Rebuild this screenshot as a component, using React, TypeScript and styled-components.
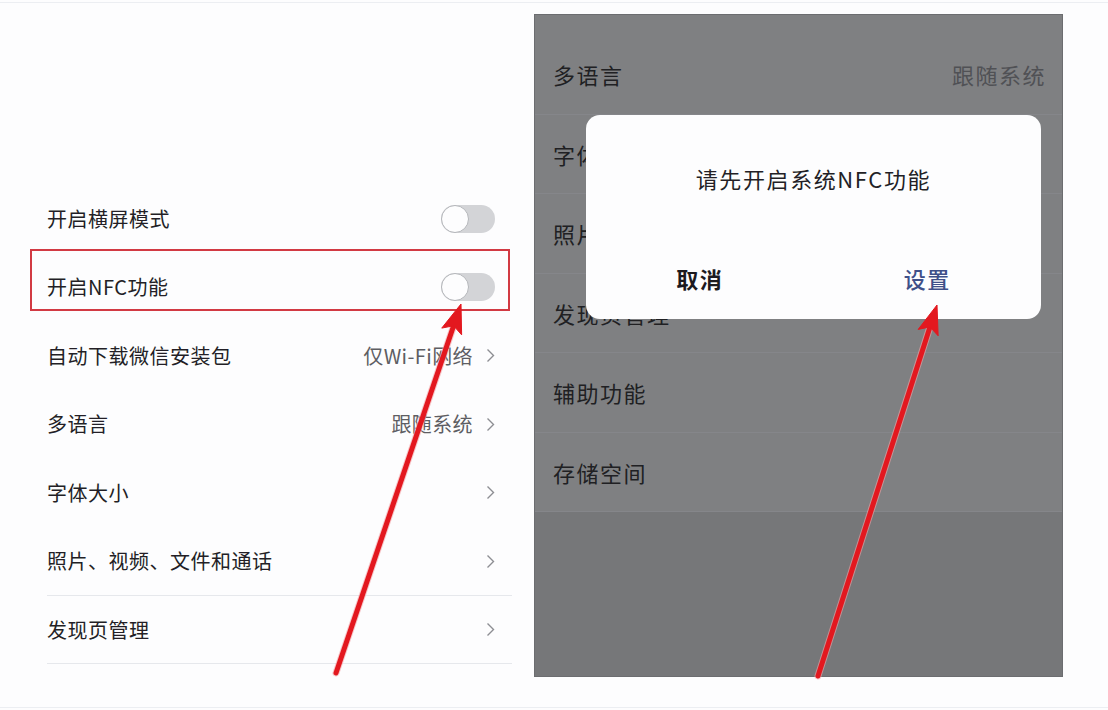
import React from "react";
import styled, { createGlobalStyle } from "styled-components";

const GlobalStyle = createGlobalStyle`
  html, body { margin: 0; padding: 0; background: #fdfdfe; }
  body { font-family: "Noto Sans CJK SC", "Noto Sans", sans-serif; }
  * { box-sizing: border-box; }
`;

const Root = styled.div`
  position: relative;
  width: 1108px;
  height: 710px;
  overflow: hidden;
  background: #fdfdfe;
  padding-top: 2px;
`;

const Frame = styled.div`
  height: 706px;
  border-top: 1px solid #eceef2;
  border-bottom: 1px solid #eceef2;
  display: flex;
  align-items: flex-start;
`;

const LeftPane = styled.div`
  width: 534px;
  flex: none;
  padding: 181.75px 22px 0 47px;
`;

const List = styled.div`
  position: relative;
  display: flex;
  flex-direction: column;
`;

const Row = styled.div<{ $line?: boolean }>`
  height: 68.5px;
  display: flex;
  align-items: center;
  justify-content: space-between;
  padding-right: 17px;
  border-bottom: 1px solid ${(p) => (p.$line ? "#e6e8ec" : "transparent")};
`;

const Label = styled.span`
  font-family: "Noto Sans CJK SC", sans-serif;
  font-size: 20px;
  letter-spacing: 0.5px;
  color: #231f26;
  line-height: 1;
`;

const Trail = styled.div`
  display: flex;
  align-items: center;
  gap: 13px;
`;

const Value = styled.span`
  font-family: "Noto Sans CJK SC", sans-serif;
  font-size: 20px;
  letter-spacing: 0.4px;
  color: #5e5e63;
  line-height: 1;
`;

const Track = styled.div`
  width: 54px;
  height: 28px;
  border-radius: 14px;
  background: #d3d4d7;
  display: flex;
  align-items: center;
`;

const Knob = styled.div`
  width: 28px;
  height: 28px;
  border-radius: 50%;
  background: #fdfdfe;
  border: 1.5px solid #b4b6ba;
`;

const Highlight = styled.div`
  position: absolute;
  left: -17px;
  top: 64.5px;
  width: 480px;
  height: 62px;
  border: 2px solid #d23a43;
  pointer-events: none;
`;

const RightPane = styled.div`
  position: relative;
  margin-top: 11px;
  width: 529px;
  height: 663px;
  flex: none;
  background: #7f8082;
  border: 1px solid #6c6d70;
  display: flex;
  flex-direction: column;
  padding-top: 20px;
`;

const DimRow = styled.div`
  height: 79.5px;
  display: flex;
  align-items: center;
  justify-content: space-between;
  padding: 0 16px 0 18px;
  border-bottom: 1px solid #85868a;
  flex: none;
`;

const DimLabel = styled.span`
  font-family: "Noto Sans CJK SC", sans-serif;
  font-size: 22px;
  letter-spacing: 1.5px;
  color: #202023;
  line-height: 1;
`;

const DimValue = styled.span`
  font-family: "Noto Sans CJK SC", sans-serif;
  font-size: 22px;
  letter-spacing: 1.5px;
  color: #505155;
  line-height: 1;
`;

const DimFill = styled.div`
  flex: 1;
  background: #767779;
`;

const Dialog = styled.div`
  position: absolute;
  left: 51px;
  top: 100px;
  width: 455px;
  height: 204px;
  border-radius: 14px;
  background: #fdfdfe;
  display: flex;
  flex-direction: column;
`;

const DialogTitle = styled.div`
  height: 126px;
  display: flex;
  align-items: center;
  justify-content: center;
  font-family: "Noto Sans CJK SC", sans-serif;
  font-size: 22px;
  letter-spacing: 1.6px;
  color: #231f26;
  line-height: 1;
`;

const DialogActions = styled.div`
  height: 78px;
  display: grid;
  grid-template-columns: 1fr 1fr;
  align-items: center;
`;

const ActionButton = styled.button<{ $primary?: boolean }>`
  border: 0;
  background: transparent;
  padding: 0 0 4px;
  text-align: center;
  font-family: "Noto Sans CJK SC", sans-serif;
  font-size: 22px;
  letter-spacing: 1.5px;
  font-weight: ${(p) => (p.$primary ? 500 : 700)};
  color: ${(p) => (p.$primary ? "#3f5089" : "#1c1a1f")};
  line-height: 1;
`;

const Overlay = styled.svg`
  position: absolute;
  left: 0;
  top: 0;
  pointer-events: none;
`;

const Chevron = () => (
  <svg width="9" height="15" viewBox="0 0 9 15">
    <polyline points="1.5,1.5 7.5,7.5 1.5,13.5" fill="none" stroke="#8d8e93" strokeWidth="1.4" />
  </svg>
);

const Toggle = () => (
  <Track>
    <Knob />
  </Track>
);

type Item = { label: string; value?: string; toggle?: boolean; line?: boolean };

const items: Item[] = [
  { label: "开启横屏模式", toggle: true },
  { label: "开启NFC功能", toggle: true },
  { label: "自动下载微信安装包", value: "仅Wi-Fi网络" },
  { label: "多语言", value: "跟随系统" },
  { label: "字体大小", value: "" },
  { label: "照片、视频、文件和通话", value: "", line: true },
  { label: "发现页管理", value: "", line: true },
];

const dimItems = [
  { label: "多语言", value: "跟随系统" },
  { label: "字体大小" },
  { label: "照片、视频、文件和通话" },
  { label: "发现页管理" },
  { label: "辅助功能" },
  { label: "存储空间" },
];

type Arrow = { x1: number; y1: number; x2: number; y2: number };

const arrows: Arrow[] = [
  { x1: 336, y1: 673, x2: 461, y2: 304 },
  { x1: 818, y1: 676, x2: 937, y2: 305 },
];

const ArrowShape = ({ a }: { a: Arrow }) => {
  const dx = a.x2 - a.x1;
  const dy = a.y2 - a.y1;
  const len = Math.hypot(dx, dy);
  const ux = dx / len;
  const uy = dy / len;
  const px = -uy;
  const py = ux;
  const head = 29;
  const half = 10.5;
  const bx = a.x2 - ux * head;
  const by = a.y2 - uy * head;
  const nx = a.x2 - ux * (head - 6);
  const ny = a.y2 - uy * (head - 6);
  const pts = [
    `${a.x2},${a.y2}`,
    `${bx + px * half},${by + py * half}`,
    `${nx},${ny}`,
    `${bx - px * half},${by - py * half}`,
  ].join(" ");
  return (
    <g>
      <line x1={a.x1} y1={a.y1} x2={nx} y2={ny} stroke="#f4a3a6" strokeWidth={7} strokeLinecap="round" opacity={0.6} />
      <line x1={a.x1} y1={a.y1} x2={nx} y2={ny} stroke="#e3181f" strokeWidth={5} strokeLinecap="round" />
      <polygon points={pts} fill="#e3181f" stroke="#e3181f" strokeWidth={1} strokeLinejoin="round" />
    </g>
  );
};

export default function App() {
  return (
    <>
      <GlobalStyle />
      <Root>
        <Frame>
          <LeftPane>
            <List>
              {items.map((it) => (
                <Row key={it.label} $line={it.line}>
                  <Label>{it.label}</Label>
                  {it.toggle ? (
                    <Toggle />
                  ) : (
                    <Trail>
                      {it.value ? <Value>{it.value}</Value> : null}
                      <Chevron />
                    </Trail>
                  )}
                </Row>
              ))}
              <Highlight />
            </List>
          </LeftPane>
          <RightPane>
            {dimItems.map((it) => (
              <DimRow key={it.label}>
                <DimLabel>{it.label}</DimLabel>
                {it.value ? <DimValue>{it.value}</DimValue> : null}
              </DimRow>
            ))}
            <DimFill />
            <Dialog>
              <DialogTitle>请先开启系统NFC功能</DialogTitle>
              <DialogActions>
                <ActionButton>取消</ActionButton>
                <ActionButton $primary>设置</ActionButton>
              </DialogActions>
            </Dialog>
          </RightPane>
        </Frame>
        <Overlay width={1108} height={710} viewBox="0 0 1108 710">
          {arrows.map((a, i) => (
            <ArrowShape key={i} a={a} />
          ))}
        </Overlay>
      </Root>
    </>
  );
}
